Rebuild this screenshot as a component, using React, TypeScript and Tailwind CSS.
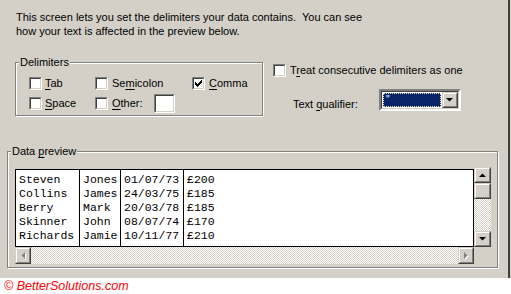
const rows = [
  ["Steven", "Jones", "01/07/73", "£200"],
  ["Collins", "James", "24/03/75", "£185"],
  ["Berry", "Mark", "20/03/78", "£185"],
  ["Skinner", "John", "08/07/74", "£170"],
  ["Richards", "Jamie", "10/11/77", "£210"],
];

const colWidths = ["w-[64px]", "w-[41px]", "w-[63px]", "flex-1"];

function Check({ checked }: { checked?: boolean }) {
  return (
    <div className="h-[13px] w-[13px] shrink-0 border border-t-[#808080] border-l-[#808080] border-r-white border-b-white">
      <div className="h-full w-full border border-t-[#404040] border-l-[#404040] border-r-[#d4d0c8] border-b-[#d4d0c8] bg-white">
        {checked && (
          <svg width="9" height="9" viewBox="0 0 9 9" shapeRendering="crispEdges">
            <rect x="1" y="3" width="1" height="3" fill="#000" />
            <rect x="2" y="4" width="1" height="3" fill="#000" />
            <rect x="3" y="5" width="1" height="3" fill="#000" />
            <rect x="4" y="4" width="1" height="3" fill="#000" />
            <rect x="5" y="3" width="1" height="3" fill="#000" />
            <rect x="6" y="2" width="1" height="3" fill="#000" />
            <rect x="7" y="1" width="1" height="3" fill="#000" />
          </svg>
        )}
      </div>
    </div>
  );
}

function Raised({ className, children }: { className?: string; children?: React.ReactNode }) {
  return (
    <div className={`shrink-0 border border-t-[#d4d0c8] border-l-[#d4d0c8] border-r-[#404040] border-b-[#404040] ${className ?? ""}`}>
      <div className="flex h-full w-full items-center justify-center border border-t-white border-l-white border-r-[#808080] border-b-[#808080] bg-[#d4d0c8]">
        {children}
      </div>
    </div>
  );
}

function Arrow({ dir, disabled }: { dir: "up" | "down" | "left" | "right"; disabled?: boolean }) {
  const pts = {
    up: "0,4 7,4 3.5,0.5",
    down: "0,0 7,0 3.5,3.5",
    left: "4,0 4,7 0.5,3.5",
    right: "0,0 0,7 3.5,3.5",
  }[dir];
  const horiz = dir === "left" || dir === "right";
  return (
    <svg width={horiz ? 5 : 8} height={horiz ? 8 : 5} viewBox={horiz ? "0 0 5 8" : "0 0 8 5"}>
      {disabled && <polygon points={pts} fill="#fff" transform="translate(1,1)" />}
      <polygon points={pts} fill={disabled ? "#808080" : "#000"} />
    </svg>
  );
}

function Label({ text, u }: { text: string; u: number }) {
  return (
    <span className="whitespace-pre">
      {text.slice(0, u)}
      <span className="underline underline-offset-[2px]">{text[u]}</span>
      {text.slice(u + 1)}
    </span>
  );
}

const dither =
  "bg-[repeating-conic-gradient(#ffffff_0%_25%,#d4d0c8_0%_50%)] bg-[length:2px_2px]";

export default function App() {
  return (
    <div className="flex h-[294px] w-[511px] flex-col bg-white font-['Liberation_Sans',Arial,sans-serif] text-[11px] leading-[13px] text-black">
      <div className="flex h-[278px]">
        <div className="w-[508px] bg-[#d4d0c8]">
          <p className="pl-[16px] pt-[10px] leading-[14px]">
            This screen lets you set the delimiters your data contains.&nbsp; You can see
            <br />
            how your text is affected in the preview below.
          </p>

          <div className="mt-[24px] flex">
            <div className="ml-[15px] h-[54px] w-[248px] border border-[#808080] shadow-[1px_1px_0_#ffffff,inset_1px_1px_0_#ffffff]">
              <div className="-mt-[7px] ml-[3px] w-fit bg-[#d4d0c8] px-[1px]">Delimiters</div>
              <div className="mt-[8px] grid grid-cols-[66px_97px_auto] gap-y-[7px] pl-[13px]">
                <div className="flex h-[13px] items-center gap-[3px]">
                  <Check />
                  <Label text="Tab" u={0} />
                </div>
                <div className="flex h-[13px] items-center gap-[4px]">
                  <Check />
                  <Label text="Semicolon" u={2} />
                </div>
                <div className="flex h-[13px] items-center gap-[4px]">
                  <Check checked />
                  <Label text="Comma" u={0} />
                </div>
                <div className="flex h-[13px] items-center gap-[3px]">
                  <Check />
                  <Label text="Space" u={0} />
                </div>
                <div className="flex h-[13px] items-center gap-[4px]">
                  <Check />
                  <Label text="Other:" u={0} />
                  <div className="ml-[7px] h-[19px] w-[21px] shrink-0 border border-t-[#808080] border-l-[#808080] border-r-white border-b-white">
                    <div className="h-full w-full border border-t-[#404040] border-l-[#404040] border-r-[#d4d0c8] border-b-[#d4d0c8] bg-white" />
                  </div>
                </div>
              </div>
            </div>

            <div className="ml-[10px] flex flex-col">
              <div className="mt-[2px] flex h-[13px] items-center gap-[4px]">
                <Check />
                <Label text="Treat consecutive delimiters as one" u={1} />
              </div>
              <div className="mt-[12px] flex items-center pl-[20px]">
                <div className="mt-[8px] w-[86px]">
                  <Label text="Text qualifier:" u={5} />
                </div>
                <div className="flex h-[22px] w-[82px] border-2 border-t-[#808080] border-l-[#808080] border-r-white border-b-white">
                  <div className="flex flex-1 border border-t-[#404040] border-l-[#404040] border-r-[#d4d0c8] border-b-[#d4d0c8] bg-white">
                    <div className="m-[1px] flex-1 overflow-hidden border border-dotted border-[#f0e8a0] bg-[#0a246a] pl-[2px] text-[10px] leading-[11px] text-white">
                      "
                    </div>
                    <Raised className="h-full w-[16px]">
                      <Arrow dir="down" />
                    </Raised>
                  </div>
                </div>
              </div>
            </div>
          </div>

          <div className="mt-[35px] ml-[7px] h-[117px] w-[491px] border border-[#808080] shadow-[1px_1px_0_#ffffff,inset_1px_1px_0_#ffffff]">
            <div className="-mt-[7px] ml-[3px] w-fit bg-[#d4d0c8] px-[1px]">
              <Label text="Data preview" u={5} />
            </div>
            <div className="mt-[9px] flex items-start pl-[7px]">
              <div className="mt-[2px] w-[459px]">
                <div className="flex h-[78px] border border-black bg-white font-['Liberation_Mono','Courier_New',monospace] text-[11.5px] leading-[14px]">
                  {colWidths.map((w, ci) => (
                    <div key={ci} className={`${w} ${ci < 3 ? "border-r border-black" : ""} pl-[3px] pt-[3px]`}>
                      {rows.map((r) => (
                        <div key={r[0]} className="whitespace-pre">
                          {r[ci]}
                        </div>
                      ))}
                    </div>
                  ))}
                </div>
                <div className={`flex h-[17px] justify-between ${dither}`}>
                  <Raised className="h-[17px] w-[16px]">
                    <Arrow dir="left" disabled />
                  </Raised>
                  <Raised className="h-[17px] w-[16px]">
                    <Arrow dir="right" disabled />
                  </Raised>
                </div>
              </div>
              <div className={`flex h-[80px] w-[17px] flex-col ${dither}`}>
                <Raised className="h-[16px] w-[17px]">
                  <Arrow dir="up" />
                </Raised>
                <Raised className="h-[16px] w-[17px]" />
                <div className="flex-1" />
                <Raised className="h-[16px] w-[17px]">
                  <Arrow dir="down" />
                </Raised>
              </div>
            </div>
          </div>
        </div>
        <div className="w-[2px] bg-[#404040]" />
        <div className="w-[1px] bg-[#d4d0c8]" />
      </div>
      <div className="h-[16px] pl-[4px] text-[12.5px] italic leading-[16px] text-[#ff0000]">
        © BetterSolutions.com
      </div>
    </div>
  );
}
